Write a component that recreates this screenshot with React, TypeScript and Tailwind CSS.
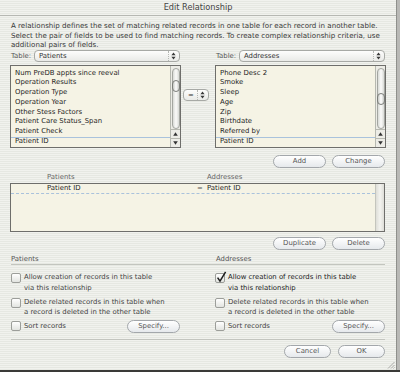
import type { ReactNode } from 'react';

const leftFields = [
  'Num PreDB appts since reeval',
  'Operation Results',
  'Operation Type',
  'Operation Year',
  'Other Stess Factors',
  'Patient Care Status_Span',
  'Patient Check',
  'Patient ID',
];

const rightFields = ['Phone Desc 2', 'Smoke', 'Sleep', 'Age', 'Zip', 'Birthdate', 'Referred by', 'Patient ID'];

function UpDown() {
  return (
    <svg width="5" height="8" viewBox="0 0 5 8" className="shrink-0">
      <path d="M2.5 0.6 L4.6 3.2 H0.4 Z M2.5 7.4 L4.6 4.8 H0.4 Z" fill="#3a3a3a" />
    </svg>
  );
}

function Popup({ label, className = '' }: { label: string; className?: string }) {
  return (
    <div
      className={`flex h-[12px] items-center justify-between rounded-[4px] border border-[#a7a9a5] bg-[linear-gradient(to_bottom,#fdfdfc,#e9eae7)] pl-[4px] pr-[3px] text-[#333] ${className}`}
    >
      <span>{label}</span>
      <span className="flex h-full items-center border-l border-dotted border-[#b5b7b3] pl-[2px]">
        <UpDown />
      </span>
    </div>
  );
}

function AquaButton({ children, className = '' }: { children: ReactNode; className?: string }) {
  return (
    <div
      className={`flex h-[13px] items-center justify-center rounded-full border border-[#a3a7ab] bg-[linear-gradient(to_bottom,#ffffff,#e6e9ec)] text-[#555] ${className}`}
    >
      {children}
    </div>
  );
}

function Arrow({ up }: { up?: boolean }) {
  return (
    <svg width="5" height="4" viewBox="0 0 5 4">
      <path d={up ? 'M2.5 0.3 L4.8 3.7 H0.2 Z' : 'M2.5 3.7 L4.8 0.3 H0.2 Z'} fill="#333" />
    </svg>
  );
}

function ScrollBar({ thumb }: { thumb: string }) {
  return (
    <div className="flex w-[10px] flex-col border-l border-[#b6b8b0] bg-[#ecece6]">
      <div className="mx-auto mt-[2px] flex h-[61px] w-[8px] flex-col rounded-full border border-[#a4a6a1] bg-[linear-gradient(to_right,#d8dad6,#fbfbfa,#d8dad6)]">
        <div
          className={`-mx-px h-[12px] rounded-full border border-[#7c7e7a] bg-[linear-gradient(to_right,#c6c8c4,#ffffff,#c6c8c4)] ${thumb}`}
        />
      </div>
      <div className="mt-auto flex h-[9px] items-center justify-center border-t border-[#b6b8b0]">
        <Arrow up />
      </div>
      <div className="flex h-[9px] items-center justify-center border-t border-[#b6b8b0]">
        <Arrow />
      </div>
    </div>
  );
}

function FieldList({ items, thumb }: { items: string[]; thumb: string }) {
  return (
    <div className="mt-[3px] flex h-[83px] border border-[#6e6e6b] bg-[#f5f3e5]">
      <div className="flex-1 pt-[2.5px]">
        {items.map((item, i) => (
          <div
            key={item}
            className={`h-[9.8px] pl-[4px] leading-[9.8px] text-[#1e1e1e] ${
              i === items.length - 1 ? 'shadow-[inset_0_1px_0_#a9c2dc]' : ''
            }`}
          >
            {item}
          </div>
        ))}
      </div>
      <ScrollBar thumb={thumb} />
    </div>
  );
}

function CheckBox({ checked }: { checked?: boolean }) {
  return (
    <div className="relative mt-[1px] h-[10px] w-[10px] shrink-0 rounded-[2px] border border-[#9c9e9a] bg-[linear-gradient(to_bottom,#ffffff,#e2e4e0)]">
      {checked && (
        <svg width="11" height="12" viewBox="0 0 11 12" className="absolute left-[0px] top-[-3px]">
          <path d="M1.6 6.6 L4 10.2 L9.6 0.8" fill="none" stroke="#1f1f1f" strokeWidth="1.5" />
        </svg>
      )}
    </div>
  );
}

function Option({ checked, lines }: { checked?: boolean; lines: string[] }) {
  return (
    <div className="flex gap-[3px]">
      <CheckBox checked={checked} />
      <div className={`leading-[10.5px] ${checked ? 'text-[#222]' : 'text-[#444]'}`}>
        {lines.map((l) => (
          <div key={l}>{l}</div>
        ))}
      </div>
    </div>
  );
}

function RecordOptions({ allow, pad }: { allow?: boolean; pad: string }) {
  return (
    <div className={`flex flex-col ${pad}`}>
      <div className="mt-[7px]">
        <Option checked={allow} lines={['Allow creation of records in this table', 'via this relationship']} />
      </div>
      <div className="mt-[3.5px]">
        <Option lines={['Delete related records in this table when', 'a record is deleted in the other table']} />
      </div>
      <div className="mt-[2px] flex h-[13px] items-center">
        <div className="flex items-center gap-[3px] text-[#444]">
          <CheckBox />
          <span className="mt-[1px]">Sort records</span>
        </div>
        <AquaButton className="ml-auto w-[53px]">Specify...</AquaButton>
      </div>
    </div>
  );
}

export default function App() {
  return (
    <div className="h-[372px] w-[400px] overflow-hidden bg-[#b9b9b6] font-['DejaVu_Sans',sans-serif] text-[6.9px]">
      <div className="relative flex h-[370px] w-[397px] flex-col border-r border-[#8f908c] bg-[repeating-linear-gradient(to_bottom,#f1f2ee_0px,#f1f2ee_1px,#e6e8e2_1px,#e6e8e2_2px)]">
        <div className="flex h-[16px] items-center justify-center border-b border-[#b6b8b2] text-[8.2px] text-[#444]">
          Edit Relationship
        </div>

        <p className="mt-[5px] px-[11px] text-[7.1px] leading-[9.5px] text-[#383838]">
          A relationship defines the set of matching related records in one table for each record in another table.
          <br />
          Select the pair of fields to be used to find matching records. To create complex relationship criteria, use
          <br />
          additional pairs of fields.
        </p>

        <div className="mt-[0.5px] flex pl-[10px]">
          <div className="flex w-[171px] flex-col">
            <div className="flex items-center">
              <span className="ml-[1px] w-[23px] text-[#555]">Table:</span>
              <Popup label="Patients" className="w-[146px]" />
            </div>
            <FieldList items={leftFields} thumb="mt-[11px]" />
          </div>
          <div className="w-[34px] pl-[2px] pt-[39px]">
            <Popup label="=" className="h-[11px] w-[26px]" />
          </div>
          <div className="flex w-[171px] flex-col">
            <div className="flex items-center">
              <span className="ml-[1px] w-[23px] text-[#555]">Table:</span>
              <Popup label="Addresses" className="w-[146px]" />
            </div>
            <FieldList items={rightFields} thumb="mt-[24px]" />
          </div>
        </div>

        <div className="mt-[7px] flex justify-end gap-[6px] pr-[11px]">
          <AquaButton className="w-[53px]">Add</AquaButton>
          <AquaButton className="w-[53px]">Change</AquaButton>
        </div>

        <div className="mt-[4px] flex h-[10px] items-center pl-[47px] leading-[10px] text-[#666]">
          <span className="w-[160px]">Patients</span>
          <span>Addresses</span>
        </div>

        <div className="ml-[10px] mt-[1px] flex h-[49px] w-[375px] border border-[#6e6e6b] bg-[#f5f3e5]">
          <div className="flex-1">
            <div className="flex h-[10px] items-center border-b border-dashed border-[#a9c2dc] text-[#1e1e1e]">
              <span className="ml-[36px] w-[150px]">Patient ID</span>
              <span className="w-[10px] text-[#555]">=</span>
              <span>Patient ID</span>
            </div>
          </div>
          <div className="w-[9px] border-l border-[#c4c5bd] bg-[linear-gradient(to_right,#deded8,#f3f3ef,#deded8)]" />
        </div>

        <div className="mt-[5px] flex justify-end gap-[6px] pr-[11px]">
          <AquaButton className="w-[53px]">Duplicate</AquaButton>
          <AquaButton className="w-[53px]">Delete</AquaButton>
        </div>

        <div className="mx-[11px] mt-[4px] flex h-[11px] border-b border-[#c3c5bf] leading-[10px] text-[#555]">
          <span className="w-[205px]">Patients</span>
          <span>Addresses</span>
        </div>

        <div className="flex pl-[11px]">
          <RecordOptions pad="w-[189px] pr-[20px]" />
          <RecordOptions allow pad="w-[186px] pl-[15px] pr-[1px]" />
        </div>

        <div className="mx-[11px] mt-[6.5px] border-t border-[#c3c5bf]" />

        <div className="mt-[5px] flex justify-end gap-[7px] pr-[11px]">
          <AquaButton className="h-[12px] w-[47px]">Cancel</AquaButton>
          <AquaButton className="h-[12px] w-[47px]">OK</AquaButton>
        </div>

        <svg width="8" height="8" viewBox="0 0 8 8" className="absolute bottom-[1px] right-[1px]">
          <path d="M7.5 1 L1 7.5 M7.5 4 L4 7.5 M7.5 6.5 L6.5 7.5" stroke="#9a9b97" strokeWidth="0.8" />
        </svg>
      </div>
      <div className="h-[2px] w-[400px] bg-[#3a3a38]" />
    </div>
  );
}
